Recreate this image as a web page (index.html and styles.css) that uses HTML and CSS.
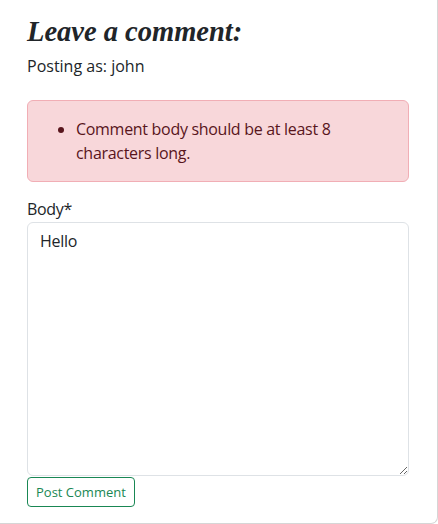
FILE: index.html
```html
<!DOCTYPE html>
<html lang="en">
<head>
<meta charset="utf-8">
<title>Leave a comment</title>
<link rel="stylesheet" href="styles.css">
</head>
<body>
<div class="card">
  <h3 class="title">Leave a comment:</h3>
  <p class="posting">Posting as: john</p>
  <div class="alert">
    <ul>
      <li>Comment body should be at least 8 characters long.</li>
    </ul>
  </div>
  <form class="form">
    <label class="label" for="body">Body*</label>
    <textarea id="body" class="textarea">Hello</textarea>
    <button type="button" class="btn">Post Comment</button>
  </form>
</div>
</body>
</html>
```
FILE: styles.css
```css
html, body {
  margin: 0;
  padding: 0;
  background: #fff;
}
body {
  font-family: "Open Sans", "Noto Sans", sans-serif;
  font-size: 16px;
  line-height: 1.5;
  color: #212529;
  letter-spacing: -0.3px;
}
.card {
  box-sizing: border-box;
  width: 438px;
  height: 524px;
  border-right: 1px solid #d6d6d6;
  border-bottom: 1px solid #d6d6d6;
  border-bottom-right-radius: 7px;
  padding: 14px 28px 0 27px;
}
.title {
  margin: 0;
  font-family: "Liberation Serif", "DejaVu Serif", serif;
  font-style: italic;
  font-weight: 700;
  font-size: 28.5px;
  line-height: 36px;
  letter-spacing: 0;
  color: #212529;
}
.posting {
  margin: 4px 0 22px;
  font-size: 16px;
  line-height: 24px;
  letter-spacing: 0;
}
.alert {
  background: #f8d7da;
  border: 1px solid #f1aeb5;
  border-radius: 6px;
  color: #58151c;
  padding: 16px 16px 0 16px;
}
.alert ul {
  margin: 0 0 16px;
  padding-left: 32px;
}
.form {
  display: flex;
  flex-direction: column;
  align-items: flex-start;
  margin-top: 15px;
}
.label {
  line-height: 24px;
  margin-bottom: 1px;
}
.textarea {
  box-sizing: border-box;
  width: 382px;
  height: 254px;
  font-family: inherit;
  font-size: 16px;
  line-height: 24px;
  letter-spacing: inherit;
  color: #212529;
  padding: 6px 12px;
  border: 1px solid #dee2e6;
  border-radius: 6px;
  margin: 0 0 1px;
  resize: vertical;
}
.btn {
  font-family: inherit;
  font-size: 13px;
  line-height: 20px;
  letter-spacing: 0;
  padding: 4px 8px;
  color: #198754;
  background: #fff;
  border: 1px solid #198754;
  border-radius: 4px;
}
```
